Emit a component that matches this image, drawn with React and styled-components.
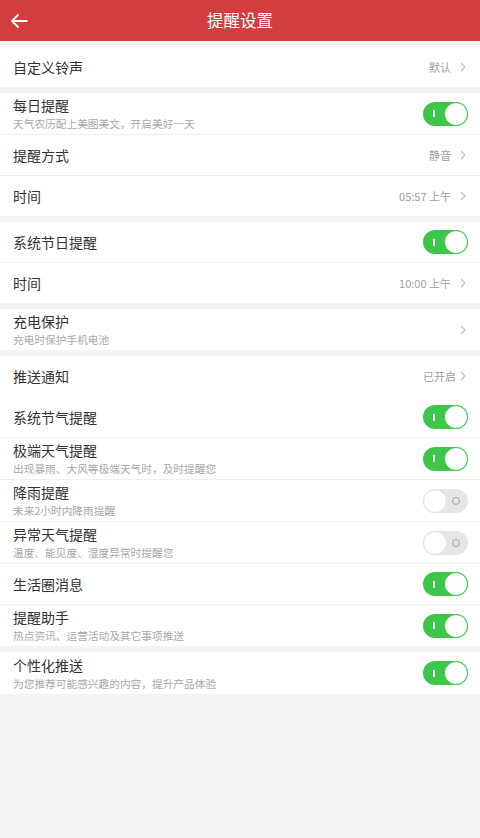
import React from 'react'
import styled, { createGlobalStyle } from 'styled-components'

const GlobalStyle = createGlobalStyle`
    body {
        margin: 0;
        background: #f4f4f4;
        font-family: "Noto Sans CJK SC", "Noto Sans", sans-serif;
    }
`

const groups = [
    [{ title: '自定义铃声', value: '默认' }],
    [
        { title: '每日提醒', sub: '天气农历配上美图美文，开启美好一天', on: true },
        { title: '提醒方式', value: '静音' },
        { title: '时间', value: '05:57 上午' },
    ],
    [
        { title: '系统节日提醒', on: true },
        { title: '时间', value: '10:00 上午' },
    ],
    [{ title: '充电保护', sub: '充电时保护手机电池', value: '' }],
    [
        { title: '推送通知', value: '已开启', tight: true },
        { title: '系统节气提醒', on: true, noLine: true },
        { title: '极端天气提醒', sub: '出现暴雨、大风等极端天气时，及时提醒您', on: true },
        { title: '降雨提醒', sub: '未来2小时内降雨提醒', on: false },
        { title: '异常天气提醒', sub: '温度、能见度、湿度异常时提醒您', on: false },
        { title: '生活圈消息', on: true },
        { title: '提醒助手', sub: '热点资讯、运营活动及其它事项推送', on: true },
    ],
    [{ title: '个性化推送', sub: '为您推荐可能感兴趣的内容，提升产品体验', on: true, tall: true }],
]

const BackArrow = () => (
    <svg width="18" height="14" viewBox="0 0 18 14">
        <path d="M17 7H2M8 1L2 7l6 6" fill="none" stroke="#fff" strokeWidth="1.8" strokeLinecap="round" strokeLinejoin="round" />
    </svg>
)

const Chevron = () => (
    <svg width="6" height="10" viewBox="0 0 6 10">
        <path d="M1 1l4 4-4 4" fill="none" stroke="#c0c0c0" strokeWidth="1.1" />
    </svg>
)

const Toggle = ({ on }) => (
    <Track $on={on}>
        {on ? <Bar /> : <Ring />}
        <Knob $on={on} />
    </Track>
)

const lineFor = (first, item) => {
    if (first) return 'none'
    return item.noLine ? '1px solid #fff' : '1px solid #efefef'
}

const SettingRow = ({ item, first }) => (
    <Row $line={lineFor(first, item)} $h={item.tall ? 42 : item.sub ? 41 : 40}>
        <Texts>
            <Title>{item.title}</Title>
            {item.sub && <Sub>{item.sub}</Sub>}
        </Texts>
        {item.on !== undefined ? (
            <Toggle on={item.on} />
        ) : (
            <Value $tight={item.tight}>
                {item.value}
                <Chevron />
            </Value>
        )}
    </Row>
)

export default function App() {
    return (
        <Page>
            <GlobalStyle />
            <Header>
                <BackButton><BackArrow /></BackButton>
                <HeaderTitle>提醒设置</HeaderTitle>
                <span />
            </Header>
            <List>
                {groups.map((group, gi) => (
                    <Group key={gi}>
                        {group.map((item, i) => (
                            <SettingRow key={i} item={item} first={i === 0} />
                        ))}
                    </Group>
                ))}
            </List>
        </Page>
    )
}

const Page = styled.div`
    min-height: 838px;
    background: #f4f4f4;
`
const Header = styled.header`
    height: 41px;
    background: #d23e3f;
    display: grid;
    grid-template-columns: 44px 1fr 44px;
    align-items: center;
`
const BackButton = styled.div`
    display: flex;
    align-items: center;
    padding-left: 10px;
    padding-top: 1px;
`
const HeaderTitle = styled.h1`
    margin: 0;
    text-align: center;
    color: #fff;
    font-size: 16.5px;
    font-weight: 400;
    line-height: 41px;
`
const List = styled.main`
    display: flex;
    flex-direction: column;
    gap: 6px;
    padding-top: 6px;
`
const Group = styled.section`
    background: #fff;
`
const Row = styled.div`
    display: flex;
    align-items: center;
    justify-content: space-between;
    height: ${p => p.$h}px;
    padding: 0 12px 0 13px;
    border-top: ${p => p.$line};
`
const Texts = styled.div`
    display: flex;
    flex-direction: column;
    gap: 2px;
`
const Title = styled.div`
    font-size: 14px;
    line-height: 19px;
    color: #333;
`
const Sub = styled.div`
    font-size: 10.7px;
    line-height: 14px;
    color: #a8a8a8;
`
const Value = styled.div`
    display: flex;
    align-items: center;
    gap: ${p => (p.$tight ? 4 : 9)}px;
    padding-right: 2px;
    font-size: 11px;
    color: #a0a0a0;
`
const Track = styled.div`
    position: relative;
    width: 45px;
    height: 24px;
    border-radius: 12px;
    background: ${p => (p.$on ? '#3dc74a' : '#e6e6e6')};
    flex-shrink: 0;
`
const Knob = styled.div`
    position: absolute;
    top: 0;
    ${p => (p.$on ? 'right: 0;' : 'left: 0;')}
    width: 24px;
    height: 24px;
    box-sizing: border-box;
    border-radius: 50%;
    background: #fff;
    border: 1.5px solid ${p => (p.$on ? '#3dc74a' : '#e0e0e0')};
`
const Bar = styled.div`
    position: absolute;
    left: 10px;
    top: 8.5px;
    width: 1.5px;
    height: 7px;
    background: #fff;
`
const Ring = styled.div`
    position: absolute;
    right: 8px;
    top: 8px;
    width: 8px;
    height: 8px;
    box-sizing: border-box;
    border-radius: 50%;
    border: 1px solid #a8a8a8;
`
